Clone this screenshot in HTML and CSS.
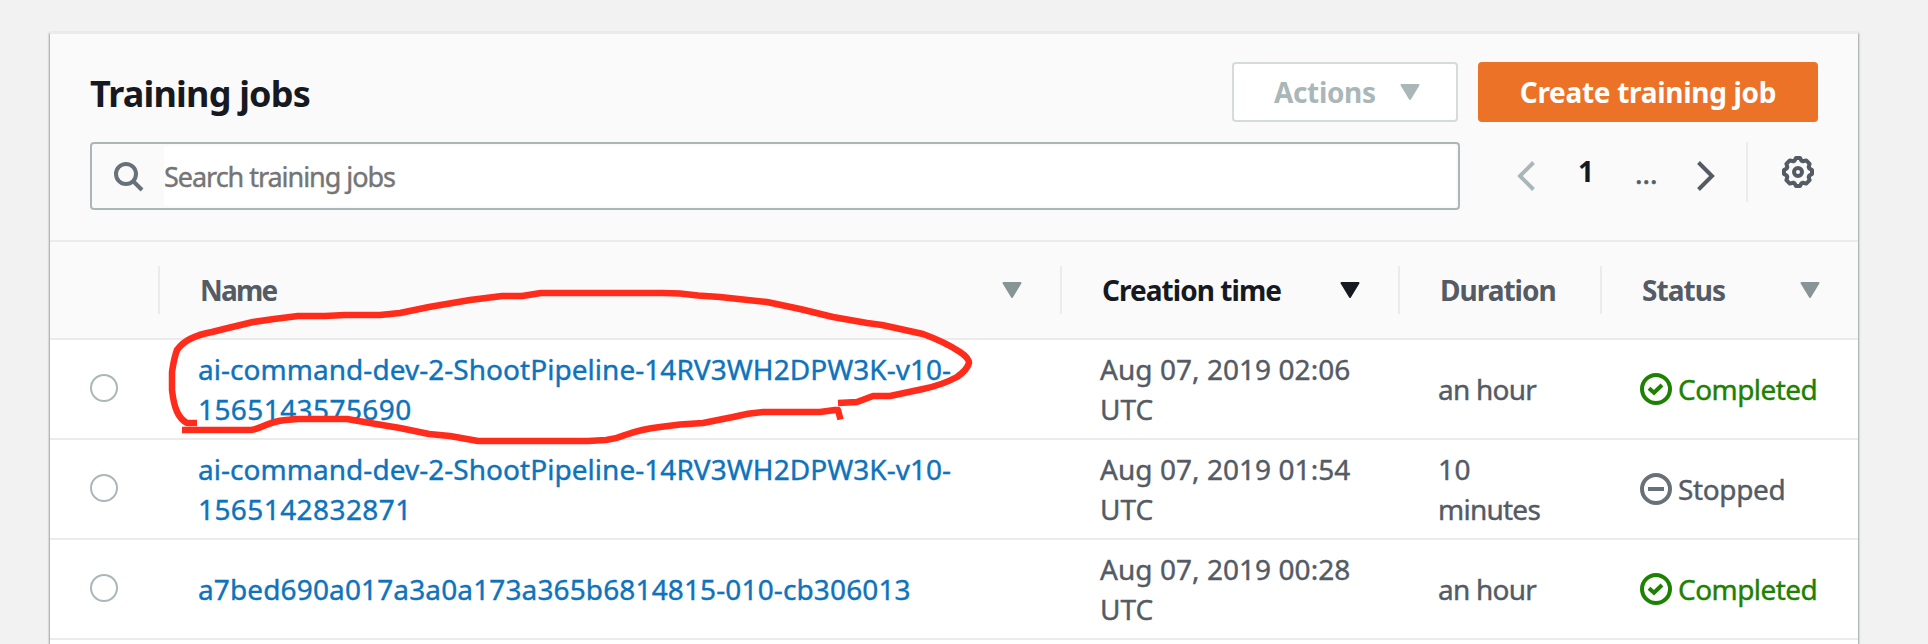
FILE: index.html
```html
<!DOCTYPE html>
<html lang="en">
<head>
<meta charset="utf-8">
<title>Training jobs</title>
<link rel="stylesheet" href="styles.css">
</head>
<body>
<svg class="defs" width="0" height="0">
  <symbol id="caret" viewBox="0 0 20 16"><path d="M1.5 1h17L10 15z" fill="currentColor" stroke="currentColor" stroke-width="2" stroke-linejoin="round"/></symbol>
  <symbol id="ok" viewBox="0 0 32 32"><g fill="none" stroke="currentColor" stroke-width="4"><circle cx="16" cy="16" r="14"/><path d="M9 15.200l5 4.600 8-7.800"/></g></symbol>
  <symbol id="stop" viewBox="0 0 32 32"><g fill="none" stroke="currentColor" stroke-width="4"><circle cx="16" cy="16" r="14"/><path d="M8 16h16"/></g></symbol>
</svg>
<main class="card">
  <header class="card-header">
    <div class="title-row">
      <h1 class="title">Training jobs</h1>
      <button class="btn btn-actions"><span class="t-actions">Actions</span><svg class="caret"><use href="#caret"/></svg></button>
      <button class="btn btn-primary"><span class="t-create">Create training job</span></button>
    </div>
    <div class="tools">
      <div class="search">
        <svg class="search-icon" viewBox="0 0 30 30"><g fill="none" stroke="currentColor" stroke-width="4"><circle cx="12" cy="12" r="10"/><path d="M19 19l9 9"/></g></svg>
        <div class="search-input"><span class="t-search">Search training jobs</span></div>
      </div>
      <nav class="pager">
        <svg class="chev chev-prev" viewBox="0 0 18 30"><path d="M16.500 1.500L3 15l13.500 13.500"/></svg>
        <span class="page">1</span>
        <span class="dots">...</span>
        <svg class="chev chev-next" viewBox="0 0 18 30"><path d="M1.500 1.500L15 15 1.500 28.500"/></svg>
      </nav>
      <div class="settings">
        <svg class="gear" viewBox="0 0 32 32"><g fill="none" stroke="currentColor" stroke-width="4"><path stroke-linejoin="round" d="M14 2h4l1.500 2.700 1.400.6 3.300-.9 3.400 3.400-.9 3.300.6 1.400L30 14v4l-2.700 1.500-.6 1.400.9 3.300-3.400 3.400-3.300-.9-1.400.6L18 30h-4l-1.500-2.700-1.400-.6-3.300.9-3.400-3.400.9-3.300-.6-1.400L2 18v-4l2.700-1.500.6-1.400-.9-3.300 3.400-3.400 3.300.9 1.400-.6z"/><circle cx="16" cy="16" r="4"/></g></svg>
      </div>
    </div>
  </header>
  <section class="table">
    <div class="row head">
      <div></div>
      <div class="th"><span class="t-name">Name</span><svg class="caret"><use href="#caret"/></svg></div>
      <div class="th sorted"><span class="t-creation">Creation time</span><svg class="caret"><use href="#caret"/></svg></div>
      <div class="th"><span class="t-duration">Duration</span></div>
      <div class="th"><span class="t-status">Status</span><svg class="caret"><use href="#caret"/></svg></div>
    </div>
    <div class="row">
      <div class="pick"><span class="radio"></span></div>
      <div class="td link"><span class="job">ai-command-dev-2-ShootPipeline-14RV3WH2DPW3K-v10-</span><br><span class="digits">1565143575690</span></div>
      <div class="td"><span class="date">Aug 07, 2019 02:06</span><br><span class="utc">UTC</span></div>
      <div class="td"><span class="dur">an hour</span></div>
      <div class="td status done"><svg class="icon"><use href="#ok"/></svg><span class="completed">Completed</span></div>
    </div>
    <div class="row">
      <div class="pick"><span class="radio"></span></div>
      <div class="td link"><span class="job">ai-command-dev-2-ShootPipeline-14RV3WH2DPW3K-v10-</span><br><span class="digits">1565142832871</span></div>
      <div class="td"><span class="date">Aug 07, 2019 01:54</span><br><span class="utc">UTC</span></div>
      <div class="td"><span class="digits">10</span><br><span class="dur">minutes</span></div>
      <div class="td status stopped"><svg class="icon"><use href="#stop"/></svg><span class="stopped-label">Stopped</span></div>
    </div>
    <div class="row">
      <div class="pick"><span class="radio"></span></div>
      <div class="td link"><span class="hash">a7bed690a017a3a0a173a365b6814815-010-cb306013</span></div>
      <div class="td"><span class="date">Aug 07, 2019 00:28</span><br><span class="utc">UTC</span></div>
      <div class="td"><span class="dur">an hour</span></div>
      <div class="td status done"><svg class="icon"><use href="#ok"/></svg><span class="completed">Completed</span></div>
    </div>
  </section>
</main>
<svg class="marker" viewBox="0 0 1928 644">
  <path d="M197 423L187 423C178 418 174 408 172 390L172 372Q174 358 177 350Q182 343 190 339Q200 334 212 332L228 328L253 322L274 319L298 316L325 316L345 315L380 315L400 313L429 307L470 300L502 296L522 296L541 293H663L680 293.500L698 295.500L720 297L767 302L800 309L833 317L867 323L882 325L923 334Q945 342 960 352Q969 358 969 363Q967 370 957 377Q942 385 923 389L890 396H873L857 402L838 403"/>
  <path d="M182 430H251Q257 429 261 427Q274 421 286 420L298 419H347L376 424L400 428L429 434L450 436L478 441H588L606 440Q616 439 625 435Q642 429 660 427L680 424.500L703 423L733 417Q748 413 763 412H820L835 410L838 410L840.500 419.500"/>
</svg>
</body>
</html>
```
FILE: styles.css
```css
* { box-sizing: border-box; }
body {
  margin: 0;
  width: 1928px;
  height: 644px;
  overflow: hidden;
  background: #f2f2f2;
  color: #545b64;
  font: 28px/40px "Noto Sans", sans-serif;
}
.defs { position: absolute; }
.card {
  width: 1808px;
  height: 612px;
  margin: 32px 0 0 50px;
  border-top: 2px solid #ebebeb;
  background: #fff;
  box-shadow: 0 2px 2px rgba(0, 28, 36, .3), 1px 1px 2px rgba(0, 28, 36, .25), -1px 1px 2px rgba(0, 28, 36, .25);
}
.card-header {
  height: 208px;
  padding: 28px 40px 0;
  background: #fafafa;
  border-bottom: 2px solid #ebebeb;
}
.title-row { display: flex; height: 60px; gap: 20px; }
.title {
  flex: 1;
  margin: 0;
  color: #16191f;
  font-size: 36px;
  line-height: 64px;
  font-weight: 700;
  letter-spacing: -.8px;
}
.btn {
  display: flex;
  align-items: center;
  justify-content: center;
  height: 60px;
  padding: 0;
  border-radius: 4px;
  font: 700 28px/40px "Noto Sans", sans-serif;
}
.btn-actions {
  width: 226px;
  justify-content: space-between;
  padding: 0 36px 0 40px;
  background: #fff;
  border: 2px solid #d5dbdb;
  color: #aab7b8;
}
.btn-primary { width: 340px; background: #eb7226; border: 0; color: #fff; }
.caret { width: 20px; height: 16px; flex: none; }
.t-actions { letter-spacing: -.35px; }
.t-create { letter-spacing: -.3px; }
.tools { display: flex; margin-top: 20px; }
.search {
  display: flex;
  width: 1370px;
  height: 68px;
  padding: 2px;
  border: 2px solid #aab7b8;
  border-radius: 4px;
}
.search-icon { width: 30px; height: 30px; margin: 16px 20px 0; color: #687078; }
.search-input { flex: 1; background: #fff; color: #757575; line-height: 60px; }
.t-search { font-size: 27px; letter-spacing: -1.04px; -webkit-text-stroke: .4px; }
.pager { display: flex; align-items: flex-start; width: 286px; height: 60px; padding-left: 57px; }
.chev { width: 18px; height: 30px; margin-top: 19px; fill: none; stroke: #545b64; stroke-width: 4; }
.chev-prev { stroke: #aab7b8; }
.page { width: 16px; margin: 9px 0 0 43px; color: #16191f; font-weight: 700; }
.dots { width: 24px; margin: 11px 0 0 41px; -webkit-text-stroke: .6px; }
.chev-next { margin-left: 38px; }
.settings { height: 60px; padding: 14px 0 0 34px; border-left: 2px solid #ebebeb; }
.gear { display: block; width: 32px; height: 32px; color: #545b64; }
.row {
  display: grid;
  grid-template-columns: 108px 902px 338px 202px 258px;
  align-items: center;
  height: 100px;
  border-bottom: 2px solid #ebebeb;
}
.head { height: 98px; background: #fafafa; font-weight: 700; }
.th {
  display: flex;
  align-items: center;
  justify-content: space-between;
  height: 48px;
  padding: 0 38px 0 40px;
  border-left: 2px solid #ebebeb;
  color: #545b64;
}
.th .caret { color: #879596; }
.sorted, .sorted .caret { color: #16191f; }
.t-name { letter-spacing: -1.8px; }
.t-creation { letter-spacing: -.95px; }
.t-duration { letter-spacing: -1px; }
.t-status { letter-spacing: -.95px; }
.td { padding-left: 40px; white-space: nowrap; -webkit-text-stroke: .4px; }
.job { letter-spacing: .04px; }
.digits { letter-spacing: .42px; }
.hash { letter-spacing: .13px; }
.date { letter-spacing: .05px; }
.dur { letter-spacing: -.75px; }
.completed { letter-spacing: -.55px; }
.stopped-label { letter-spacing: -.35px; }
.link { color: #0f73bb; }
.pick { padding: 0 0 2px 40px; }
.radio { display: block; width: 28px; height: 28px; border: 2px solid #aab7b8; border-radius: 50%; background: #fff; }
.status { display: flex; align-items: center; gap: 6px; }
.icon { width: 32px; height: 32px; flex: none; -webkit-text-stroke: 0; }
.done { color: #1d8102; }
.stopped .icon { color: #687078; }
.marker {
  position: absolute;
  left: 0;
  top: 0;
  width: 1928px;
  height: 644px;
  fill: none;
  stroke: #ff2c1c;
  stroke-width: 6.500;
  stroke-linejoin: round;
}
```
